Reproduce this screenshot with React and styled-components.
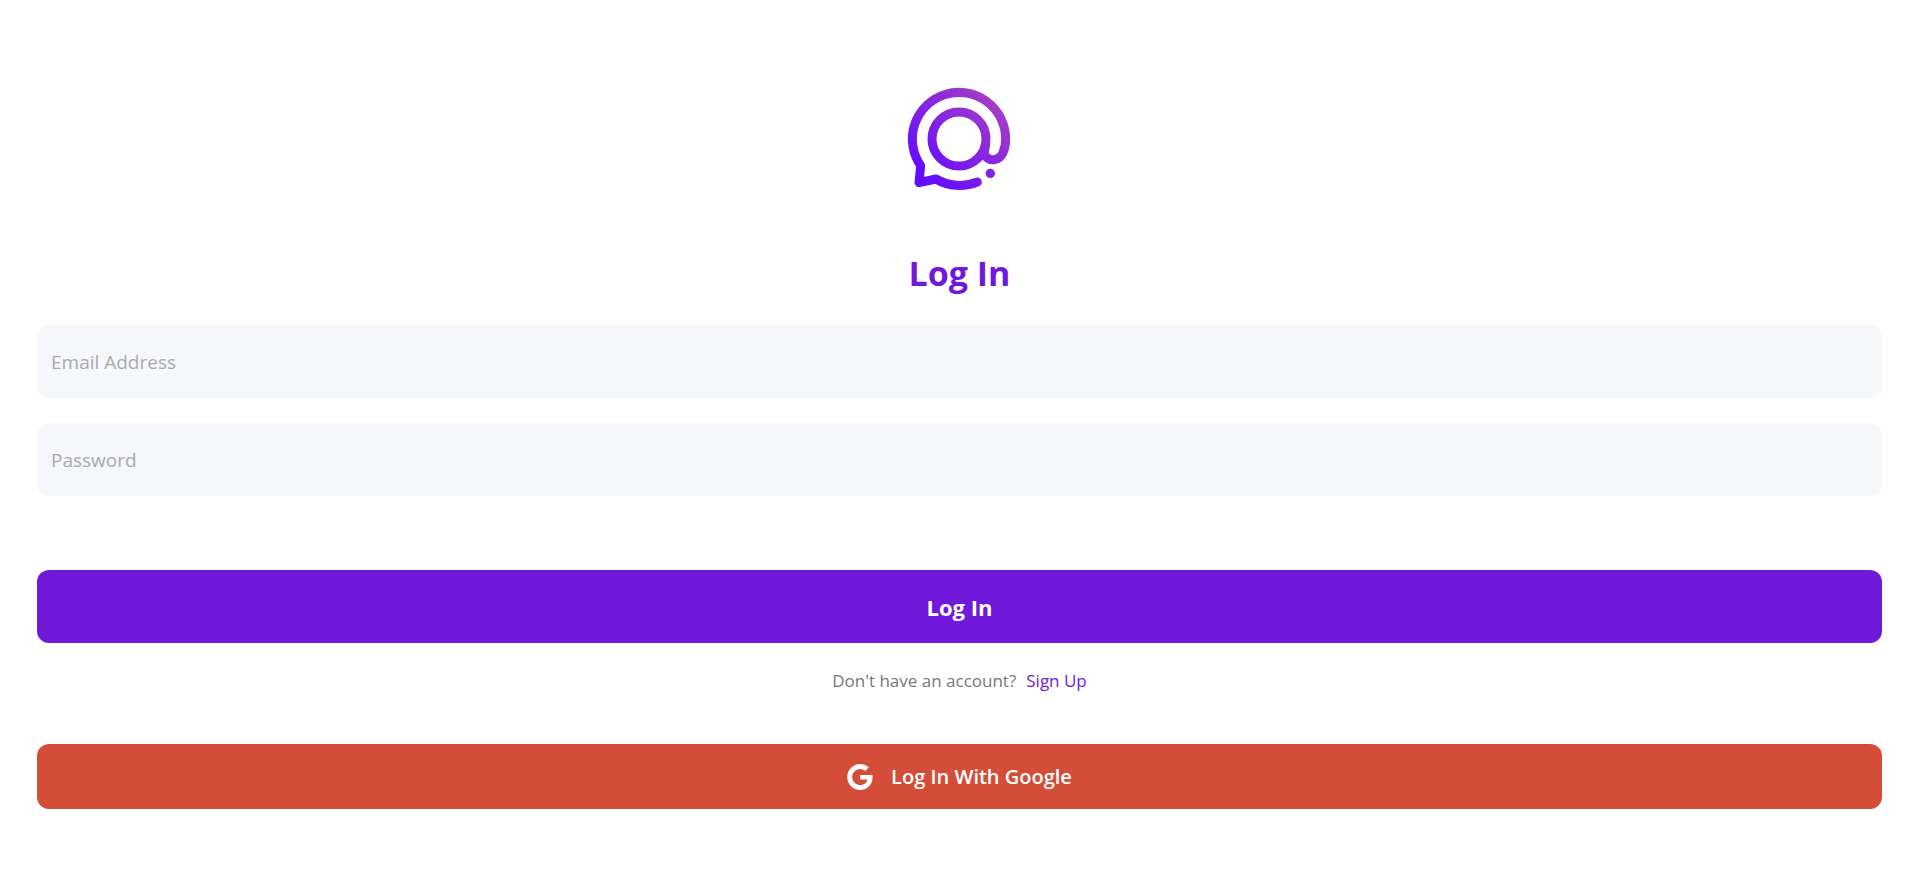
import React from "react";
import styled, { createGlobalStyle } from "styled-components";

const GlobalStyle = createGlobalStyle`
  *, *::before, *::after { box-sizing: border-box; }
  body {
    margin: 0;
    background: #fff;
    font-family: "Segoe UI", "Open Sans", sans-serif;
  }
`;

const Screen = styled.main`
  display: flex;
  flex-direction: column;
  align-items: center;
  min-height: 100vh;
  padding: 70px 36px 72px 37px;
`;

const Logo = styled.svg`
  width: 140px;
  height: 140px;
`;

const Title = styled.h1`
  margin: 38px 0 27px;
  color: #7119db;
  font-size: 34px;
  font-weight: 700;
  line-height: 50px;
`;

const Form = styled.form`
  display: flex;
  flex-direction: column;
  gap: 25px;
  width: 100%;
`;

const Field = styled.input`
  width: 100%;
  height: 73px;
  padding: 0 14px;
  border: 0;
  border-radius: 12px;
  background: #f5f7fb;
  color: #333;
  font-family: inherit;
  font-size: 19px;

  &::placeholder {
    color: #aaa;
    opacity: 1;
  }
`;

const Button = styled.button`
  display: flex;
  align-items: center;
  justify-content: center;
  gap: 18px;
  width: 100%;
  height: ${(p) => (p.$google ? 65 : 73)}px;
  margin-top: ${(p) => (p.$google ? 50 : 49)}px;
  border: 0;
  border-radius: 12px;
  background: ${(p) => (p.$google ? "#d44d38" : "#7119db")};
  color: #fff;
  font-family: inherit;
  font-size: ${(p) => (p.$google ? 20 : 22)}px;
  font-weight: ${(p) => (p.$google ? 600 : 700)};
  cursor: pointer;
`;

const GoogleIcon = styled.svg`
  width: 26px;
  height: 26px;
  fill: #fff;
`;

const Prompt = styled.p`
  display: flex;
  gap: 10px;
  margin: 25px 0 0;
  color: #777;
  font-size: 17px;
  font-weight: 500;
  line-height: 26px;
`;

const SignUpLink = styled.a`
  color: #7119db;
  text-decoration: none;
`;

function ChatLogo() {
  return (
    <Logo viewBox="0 0 420 420" role="img" aria-label="Chat logo">
      <defs>
        <linearGradient id="brand" gradientUnits="userSpaceOnUse" x1="100" y1="315" x2="310" y2="100">
          <stop offset="0" stopColor="#640cff" />
          <stop offset="1" stopColor="#a43bc7" />
        </linearGradient>
      </defs>
      <g fill="none" stroke="url(#brand)" strokeWidth="27" strokeLinecap="round" strokeLinejoin="round">
        <circle cx="207" cy="207" r="81" />
        <path d="M262 336A140 140 0 0 1 138 327L87 338L92 287A140 140 0 1 1 347 207C347 222 344 237 339 248C328 273 299 275 286 258C281 251 284 240 286 228" />
      </g>
      <circle cx="301" cy="310" r="14" fill="url(#brand)" />
    </Logo>
  );
}

export default function App() {
  return (
    <>
      <GlobalStyle />
      <Screen>
        <ChatLogo />
        <Title>Log In</Title>
        <Form onSubmit={(e) => e.preventDefault()}>
          <Field type="email" placeholder="Email Address" aria-label="Email Address" />
          <Field type="password" placeholder="Password" aria-label="Password" />
          <Button type="submit">Log In</Button>
        </Form>
        <Prompt>
          Don't have an account?
          <SignUpLink href="#signup">Sign Up</SignUpLink>
        </Prompt>
        <Button type="button" $google>
          <GoogleIcon viewBox="0 0 24 24" aria-hidden="true">
            <path d="M12.2 10.2h11.2c.2.6.2 1.2.2 1.9 0 7-4.6 11.9-11.4 11.9A12 12 0 1 1 12.2 0c3.1 0 5.8 1.2 7.9 3.1l-3.3 3.3A7.2 7.2 0 0 0 12.2 4.5a7.5 7.5 0 0 0 0 15c3.7 0 6.1-2.2 6.6-5.1h-6.6z" />
          </GoogleIcon>
          Log In With Google
        </Button>
      </Screen>
    </>
  );
}
